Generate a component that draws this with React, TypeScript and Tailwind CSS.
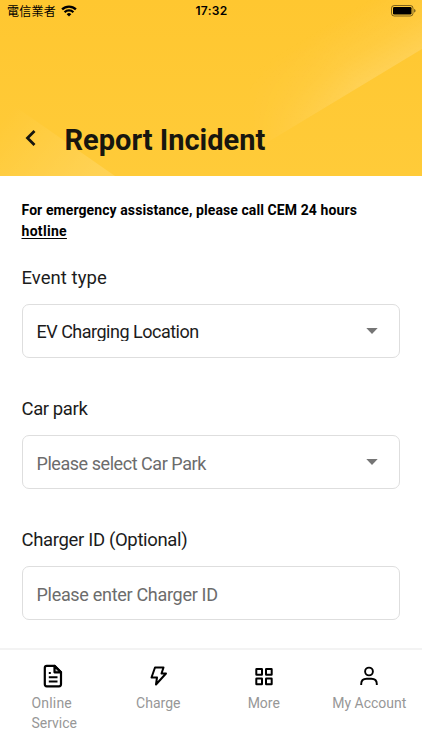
import type { ReactNode } from "react";

function StatusBar() {
  return (
    <div className="grid h-[22px] grid-cols-3 items-center pl-[7px] pr-[6px] text-black">
      <div className="flex items-center gap-[5px]">
        <span className="font-['Noto_Sans_CJK_TC',sans-serif] text-[12px] leading-[22px] tracking-[0.25px]">電信業者</span>
        <svg width="16" height="12" viewBox="0 0 16 12" fill="none" stroke="currentColor" strokeWidth="2.3">
          <path d="M1.1 4.4a9.8 9.8 0 0 1 13.8 0" />
          <path d="M3.6 7.2a6.2 6.2 0 0 1 8.8 0" />
          <path d="M8 11.5 5.7 9.2a3.25 3.25 0 0 1 4.6 0z" fill="currentColor" stroke="none" />
        </svg>
      </div>
      <span className="text-center font-[Inter,sans-serif] text-[12px] font-semibold leading-[22px] tracking-[0.3px]">17:32</span>
      <svg className="justify-self-end" width="25" height="12" viewBox="0 0 25 12">
        <rect x=".5" y=".5" width="21.5" height="10.5" rx="2.7" fill="none" stroke="#000" strokeOpacity=".5" />
        <rect x="2" y="2" width="18.5" height="7.5" rx="1.3" />
        <path d="M23.2 4v3.5c1-.3 1.3-1 1.3-1.75S24.2 4.3 23.2 4z" opacity=".6" />
      </svg>
    </div>
  );
}

function HeaderGlow() {
  return (
    <svg className="absolute inset-0" width="422" height="176" viewBox="0 0 422 176">
      <defs>
        <linearGradient id="base" x1="0" y1="0" x2="0" y2="1">
          <stop offset="0" stopColor="#ffc730" />
          <stop offset="1" stopColor="#ffcb39" />
        </linearGradient>
        <linearGradient id="beam" gradientUnits="userSpaceOnUse" x1="380" y1="74" x2="344" y2="14">
          <stop offset="0" stopColor="#fff" stopOpacity=".16" />
          <stop offset=".4" stopColor="#fff" stopOpacity=".07" />
          <stop offset="1" stopColor="#fff" stopOpacity="0" />
        </linearGradient>
        <linearGradient id="fade" gradientUnits="userSpaceOnUse" x1="255" y1="150" x2="360" y2="87">
          <stop offset="0" stopColor="#000" />
          <stop offset="1" stopColor="#fff" />
        </linearGradient>
        <mask id="beamMask">
          <rect width="422" height="176" fill="url(#fade)" />
        </mask>
        <linearGradient id="corner" gradientUnits="userSpaceOnUse" x1="95" y1="176" x2="10" y2="110">
          <stop offset="0" stopColor="#fff" stopOpacity=".14" />
          <stop offset="1" stopColor="#fff" stopOpacity="0" />
        </linearGradient>
      </defs>
      <rect width="422" height="176" fill="url(#base)" />
      <path d="M422 49 250 153V0h172z" fill="url(#beam)" mask="url(#beamMask)" />
      <path d="M0 96 115 176H0z" fill="url(#corner)" />
    </svg>
  );
}

function Field({ label, labelClass, text, textClass, select }: { label: string; labelClass: string; text: string; textClass: string; select?: boolean }) {
  return (
    <div className="flex h-[131px] flex-col">
      <div className={`h-[41px] whitespace-nowrap pt-px text-[18.5px] leading-[28px] text-[#1c1c1c] ${labelClass}`}>{label}</div>
      <div className="flex h-[54px] items-center justify-between rounded-[7px] border border-[#dedede] pl-[14px] pr-[21px]">
        <span className={`whitespace-nowrap text-[18px] ${textClass}`}>{text}</span>
        {select && (
          <svg className="mb-px" width="12" height="6" viewBox="0 0 12 6">
            <path d="M.3 0h11.4L6 6z" fill="#757575" />
          </svg>
        )}
      </div>
    </div>
  );
}

function Tab({ icon, children }: { icon: ReactNode; children: ReactNode }) {
  return (
    <div className="flex flex-1 flex-col items-center pt-[14px] text-black">
      <div className="flex h-[29px] items-start justify-center">{icon}</div>
      <div className="whitespace-nowrap text-[14px] leading-[20px] text-[#979797]">{children}</div>
    </div>
  );
}

export default function App() {
  return (
    <div className="flex h-[750px] w-[422px] flex-col overflow-hidden bg-white font-[Roboto,sans-serif]">
      <header className="relative h-[176px] shrink-0">
        <HeaderGlow />
        <div className="relative">
          <StatusBar />
          <div className="flex items-center pl-[25px] pt-[94px]">
            <svg className="mb-[4px]" width="12" height="16" viewBox="0 0 12 16" fill="none" stroke="#17160f" strokeWidth="2.8">
              <path d="M9.5 1 2.5 8 9.5 15" />
            </svg>
            <h1 className="ml-[27.5px] whitespace-nowrap text-[29px] font-bold leading-[48px] text-[#17160f]">Report Incident</h1>
          </div>
        </div>
      </header>
      <main className="h-[472px] shrink-0 overflow-hidden pl-[21.5px] pr-[22px] pt-[23px]">
        <p className="h-[64px] whitespace-nowrap pt-px text-[14px] font-bold leading-[21px] tracking-[0.09px] text-black">
          For emergency assistance, please call CEM 24 hours
          <br />
          <a className="tracking-[0.3px] underline underline-offset-2">hotline</a>
        </p>
        <Field label="Event type" labelClass="tracking-[0.05px]" text="EV Charging Location" textClass="h-[20px] overflow-hidden leading-[22px] tracking-[-0.5px] text-[#1c1c1c]" select />
        <Field label="Car park" labelClass="tracking-[-0.4px]" text="Please select Car Park" textClass="pt-[2px] text-[#6c6c6c] tracking-[-0.45px]" select />
        <Field label="Charger ID (Optional)" labelClass="tracking-[-0.34px]" text="Please enter Charger ID" textClass="pt-[2px] text-[#6c6c6c] tracking-[-0.3px]" />
      </main>
      <nav className="flex h-[102px] shrink-0 border-t-2 border-[#f3f3f3]">
        <Tab
          icon={
            <svg width="20" height="24" viewBox="0 0 20 24" fill="none" stroke="currentColor" strokeWidth="2.2" strokeLinejoin="round">
              <path d="M3.8 1.8h7.7L18 8.3v12q0 2-2 2H3.8q-2 0-2-2V3.8q0-2 2-2z" />
              <path d="M11.5 1.8v6.5H18z" fill="currentColor" fillOpacity=".25" />
              <path d="M5.8 9h2M5.8 13.3h8.7M5.800 17.5h8.7" strokeWidth="2" />
            </svg>
          }
        >
          <div className="pl-[3px] tracking-[0.2px]">Online</div>
          <div className="pl-[3px]">Service</div>
        </Tab>
        <Tab
          icon={
            <svg className="mt-[1px]" width="18" height="22" viewBox="0 0 18 22" fill="none" stroke="currentColor" strokeWidth="2" strokeLinejoin="round">
              <path d="M6 2.5h8.5l-2 6H17L7 19.5l1-7H2.500z" />
            </svg>
          }
        >
          Charge
        </Tab>
        <Tab
          icon={
            <svg className="mt-[3px]" width="18" height="19" viewBox="0 0 18 19" fill="none" stroke="currentColor" strokeWidth="2">
              <rect x="1.3" y="2" width="5.7" height="5.7" rx=".3" />
              <rect x="11" y="2" width="5.7" height="5.7" rx=".3" />
              <rect x="1.3" y="11.5" width="5.7" height="5.7" rx=".3" />
              <rect x="11" y="11.5" width="5.7" height="5.7" rx=".3" />
            </svg>
          }
        >
          More
        </Tab>
        <Tab
          icon={
            <svg className="mt-[2px]" width="18" height="20" viewBox="0 0 18 20" fill="none" stroke="currentColor" strokeWidth="1.9">
              <circle cx="9" cy="5.5" r="3.9" />
              <path d="M1.2 19v-1q0-5.3 5.5-5.3h4.6q5.5 0 5.500 5.3v1" />
            </svg>
          }
        >
          My Account
        </Tab>
      </nav>
    </div>
  );
}
